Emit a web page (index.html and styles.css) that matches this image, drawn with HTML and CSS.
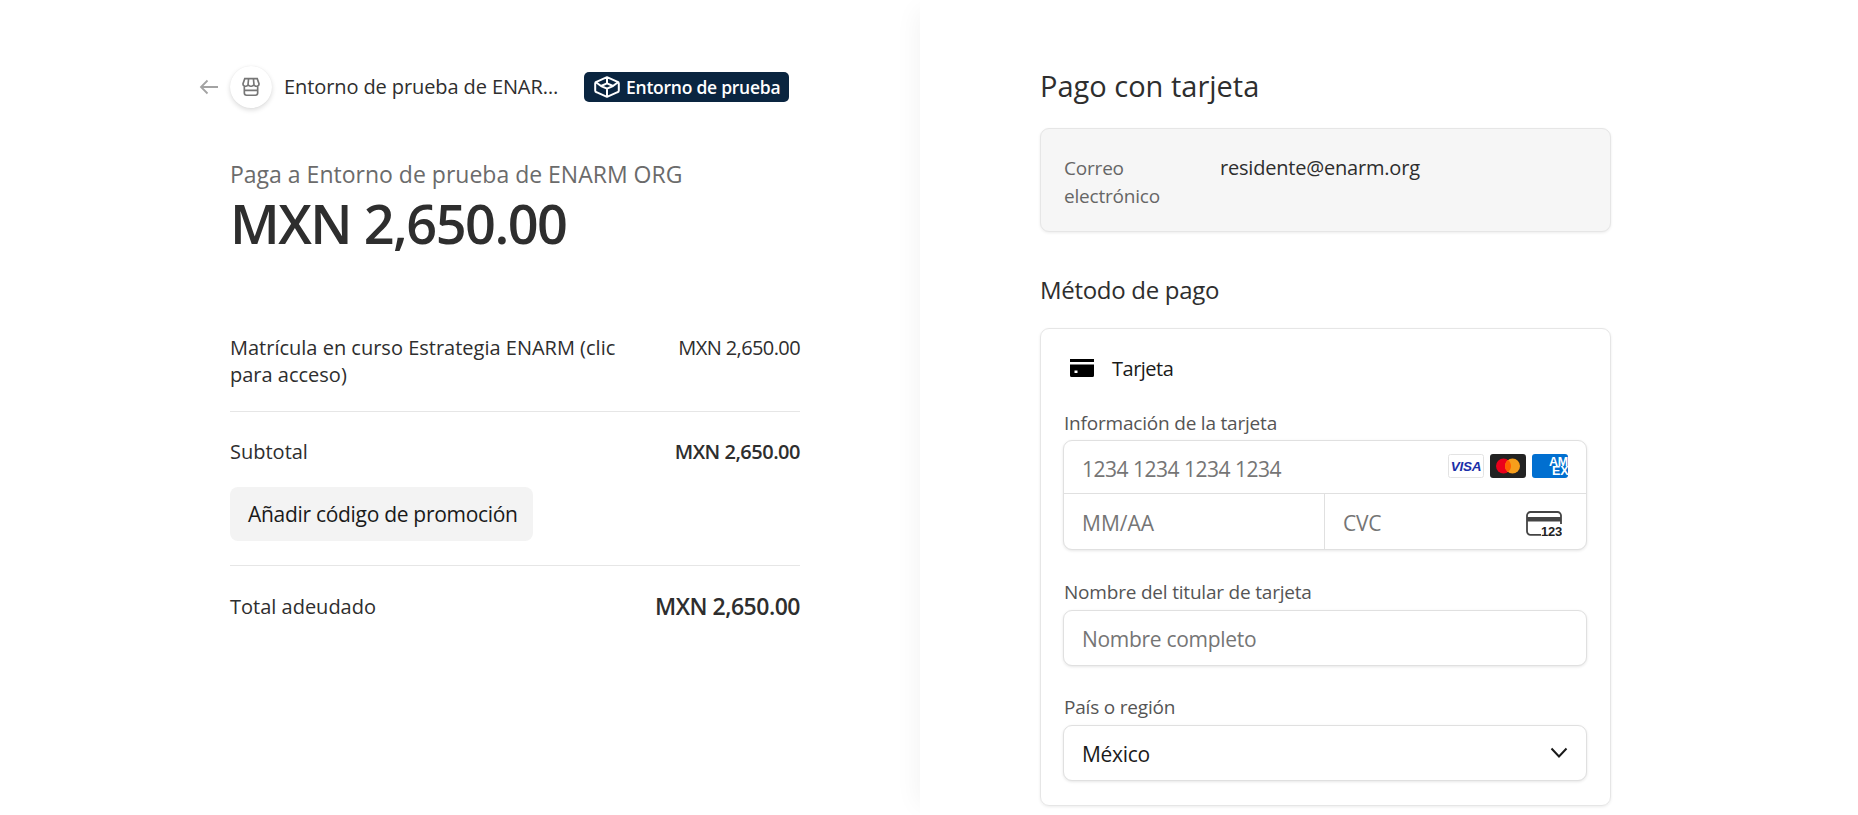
FILE: index.html
```html
<!DOCTYPE html>
<html lang="es">
<head>
<meta charset="utf-8">
<title>Pago con tarjeta</title>
<link rel="stylesheet" href="styles.css">
</head>
<body>
<main class="page">
  <section class="summary">
    <header class="merchant">
      <svg class="back" viewBox="0 0 20 16" aria-hidden="true"><path d="M19 8H2M8.500 1.500 2 8l6.500 6.500" fill="none" stroke="#a3a3a3" stroke-width="1.800"/></svg>
      <span class="avatar">
        <svg viewBox="0 0 18 18" width="20" height="20" aria-hidden="true"><path d="M3.400 1.500h11.200l1.600 4.600a2 2 0 0 1-2.200 2.200 2.600 2.600 0 0 1-2.500-1 2.600 2.600 0 0 1-2.500 1 2.600 2.600 0 0 1-2.500-1 2.600 2.600 0 0 1-2.500 1 2 2 0 0 1-2.200-2.200zM3 8.200v6.200a2 2 0 0 0 2 2h8a2 2 0 0 0 2-2V8.200M3 12h12M6.800 1.800 6.300 7M11.200 1.800 11.700 7" fill="none" stroke="#767676" stroke-width="1.500"/></svg>
      </span>
      <span class="merchant-name">Entorno de prueba de ENAR…</span>
      <span class="badge">
        <svg viewBox="0 0 26 22" width="26" height="22" aria-hidden="true"><path d="M13 1.200 23.600 5.800a1.800 1.800 0 0 1 1.200 1.700v7a1.800 1.800 0 0 1-1.200 1.700L13 20.800 2.400 16.200a1.800 1.800 0 0 1-1.200-1.700v-7a1.800 1.800 0 0 1 1.200-1.700zM13 7.300 19 10 13 12.700 7 10zM2 6.200 7 10M24 6.200 19 10M13 1.500V7.300M13 12.700V20.500" fill="none" stroke="#fff" stroke-width="2" stroke-linejoin="round"/></svg>
        Entorno de prueba
      </span>
    </header>
    <p class="pay-to">Paga a Entorno de prueba de ENARM ORG</p>
    <p class="amount">MXN 2,650.00</p>
    <div class="row item">
      <span class="item-name">Matrícula en curso Estrategia ENARM (clic para acceso)</span>
      <span class="price">MXN 2,650.00</span>
    </div>
    <div class="row subtotal">
      <span>Subtotal</span>
      <strong>MXN 2,650.00</strong>
    </div>
    <button class="promo" type="button">Añadir código de promoción</button>
    <div class="row total">
      <span>Total adeudado</span>
      <strong>MXN 2,650.00</strong>
    </div>
  </section>

  <section class="checkout">
    <h1>Pago con tarjeta</h1>
    <div class="email-box">
      <span class="email-label">Correo electrónico</span>
      <span class="email-value">residente@enarm.org</span>
    </div>
    <h2>Método de pago</h2>
    <div class="method">
      <div class="method-head">
        <svg viewBox="0 0 24 18" width="24" height="18" aria-hidden="true"><path d="M0 0h24v3H0zM0 5.500h24v11a1.500 1.500 0 0 1-1.500 1.500h-21A1.500 1.500 0 0 1 0 16.500zM4.500 11.500v2.500h3v-2.500z" fill="#000" fill-rule="evenodd"/></svg>
        <span>Tarjeta</span>
      </div>
      <label class="field-label first">Información de la tarjeta</label>
      <div class="card-group">
        <div class="card-number">
          <span class="placeholder">1234 1234 1234 1234</span>
          <span class="brands">
            <svg viewBox="0 0 36 24" width="36" height="24" aria-hidden="true"><rect x=".5" y=".5" width="35" height="23" rx="2" fill="#fff" stroke="#e3e3e3"/><text x="18" y="17" text-anchor="middle" class="visa">VISA</text></svg>
            <svg viewBox="0 0 36 24" width="36" height="24" aria-hidden="true"><rect width="36" height="24" rx="3" fill="#222"/><circle cx="13.500" cy="12" r="7.500" fill="#eb001b"/><circle cx="22.500" cy="12" r="7.500" fill="#f79e1b"/><path d="M18 6a7.500 7.500 0 0 1 0 12 7.500 7.500 0 0 1 0-12z" fill="#ff5f00"/></svg>
            <svg viewBox="0 0 36 24" width="36" height="24" aria-hidden="true"><rect width="36" height="24" rx="3" fill="#016fd0"/><text x="17" y="12" class="amex">AM</text><text x="20" y="21" class="amex">EX</text></svg>
          </span>
        </div>
        <div class="card-bottom">
          <div class="expiry"><span class="placeholder">MM/AA</span></div>
          <div class="cvc">
            <span class="placeholder">CVC</span>
            <svg class="cvc-icon" viewBox="0 0 36 25" width="36" height="25" aria-hidden="true"><path d="M15 23.800H4.500a3.500 3.500 0 0 1-3.500-3.500V4.500A3.500 3.500 0 0 1 4.500 1h27A3.500 3.500 0 0 1 35 4.500V13" fill="none" stroke="#444" stroke-width="1.800"/><rect x="1" y="6" width="34" height="4.500" fill="#444"/><text x="36" y="24.500" text-anchor="end" class="cvc-num">123</text></svg>
          </div>
        </div>
      </div>
      <label class="field-label name">Nombre del titular de tarjeta</label>
      <div class="input"><span class="placeholder">Nombre completo</span></div>
      <label class="field-label country">País o región</label>
      <div class="input select">
        <span>México</span>
        <svg class="chevron" viewBox="0 0 18 12" width="18" height="12" aria-hidden="true"><path d="M1.500 1.500 9 9.500l7.500-8" fill="none" stroke="#1a1a1a" stroke-width="2"/></svg>
      </div>
    </div>
  </section>
</main>
</body>
</html>
```

FILE: styles.css
```css
* { box-sizing: border-box; }
html, body { margin: 0; height: 815px; overflow: hidden; background: #fff; }
body { font-family: "Open Sans", "Liberation Sans", sans-serif; color: #1a1a1a; }
p, h1, h2 { margin: 0; font-weight: 400; }

.page { display: flex; height: 815px; }

.summary { width: 920px; padding: 66px 120px 0 230px; color: #2e2e2e; }
.merchant { display: flex; align-items: center; height: 42px; margin-left: -31px; white-space: nowrap; }
.back { width: 20px; height: 16px; margin-right: 11px; flex: none; }
.avatar { width: 42px; height: 42px; border-radius: 50%; background: #fff; display: flex; align-items: center; justify-content: center; box-shadow: 0 2px 5px rgba(0,0,0,.14), 0 0 1px rgba(0,0,0,.08); flex: none; }
.merchant-name { width: 276px; margin-left: 12px; font-size: 20px; line-height: 28px; letter-spacing: -.1px; flex: none; }
.badge { display: flex; align-items: center; gap: 6px; height: 30px; margin-left: 24px; padding: 0 9px 0 10px; background: #0a2540; color: #fff; border-radius: 5px; font-size: 17.500px; font-weight: 600; letter-spacing: -.25px; }

.pay-to { margin-top: 50px; font-size: 23px; line-height: 32px; color: #6b6b6b; white-space: nowrap; }
.amount { margin-top: -2px; font-size: 54px; line-height: 70px; font-weight: 600; color: #2e2e2e; letter-spacing: -1.500px; white-space: nowrap; }

.row { display: flex; justify-content: space-between; font-size: 20px; line-height: 27px; }
.row strong { font-weight: 600; letter-spacing: -.5px; }
.item { margin-top: 76px; padding-bottom: 23px; border-bottom: 1px solid #e6e6e6; }
.item-name { width: 400px; }
.price { letter-spacing: -.6px; }
.subtotal { margin-top: 26px; }
.promo { display: block; width: 303px; height: 54px; margin: 22px 0 24px; padding: 0 0 0 18px; border: 0; border-radius: 8px; background: #f3f3f3; color: #1a1a1a; font: 400 21px/28px "Open Sans", "Liberation Sans", sans-serif; letter-spacing: -.3px; text-align: left; white-space: nowrap; }
.total { padding-top: 25px; border-top: 1px solid #e6e6e6; align-items: center; }
.total strong { font-size: 23px; line-height: 30px; color: #2e2e2e; }

.checkout { flex: 1; padding: 68px 0 0 120px; box-shadow: -12px 0 24px -10px rgba(0,0,0,.05); }
h1 { font-size: 29px; line-height: 36px; color: #2e2e2e; }
h2 { margin-top: 42px; font-size: 24px; line-height: 32px; color: #2e2e2e; letter-spacing: -.3px; }

.email-box { display: flex; width: 571px; height: 104px; margin-top: 24px; padding: 25px 23px 0; background: #f6f6f6; border: 1px solid #e6e6e6; border-radius: 9px; box-shadow: 0 1px 3px rgba(0,0,0,.08); }
.email-label { width: 156px; font-size: 19px; line-height: 28px; color: #666; letter-spacing: -.2px; flex: none; }
.email-value { font-size: 20px; line-height: 28px; color: #2e2e2e; letter-spacing: -.2px; }

.method { width: 571px; height: 478px; margin-top: 22px; padding: 25px 23px 0 22px; border: 1px solid #e6e6e6; border-radius: 9px; box-shadow: 0 1px 3px rgba(0,0,0,.08); }
.method-head { display: flex; align-items: center; gap: 18px; height: 28px; padding-left: 7px; font-size: 20px; letter-spacing: -.5px; }

.field-label { display: block; margin-bottom: 5px; padding-left: 1px; font-size: 19px; line-height: 26px; color: #555; letter-spacing: -.2px; }
.field-label.first { margin-top: 28px; margin-bottom: 4px; }
.field-label.name { margin-top: 29px; }
.field-label.country { margin-top: 28px; }

.card-group, .input { border: 1px solid #e0e0e0; border-radius: 9px; background: #fff; box-shadow: 0 1px 3px rgba(0,0,0,.1); font-size: 21px; letter-spacing: -.2px; }
.card-group { height: 110px; }
.card-number { display: flex; align-items: center; justify-content: space-between; height: 53px; padding: 4px 18px 0 18px; border-bottom: 1px solid #e0e0e0; }
.card-number .placeholder { letter-spacing: -.5px; }
.brands { display: flex; gap: 6px; margin-bottom: 6px; }
.card-bottom { display: flex; height: 55px; }
.expiry { display: flex; align-items: center; width: 261px; padding: 2px 0 0 18px; border-right: 1px solid #e0e0e0; letter-spacing: 0; }
.cvc { display: flex; flex: 1; align-items: center; justify-content: space-between; padding: 2px 24px 0 18px; }
.cvc-icon { margin-top: 2px; }
.placeholder { color: #757575; }
.input { display: flex; align-items: center; height: 56px; padding: 2px 18px 0; }
.input .placeholder { letter-spacing: -.3px; }
.select { justify-content: space-between; color: #1a1a1a; letter-spacing: -.3px; }
.chevron { margin-bottom: 2px; margin-top: 0; }

.visa { font: italic 700 13.500px "Liberation Sans", sans-serif; fill: #1a2fa8; letter-spacing: -.2px; }
.amex { font: 700 12.500px "Liberation Sans", sans-serif; fill: #fff; }
.cvc-num { font: 700 13px "Liberation Sans", sans-serif; fill: #222; }
```
